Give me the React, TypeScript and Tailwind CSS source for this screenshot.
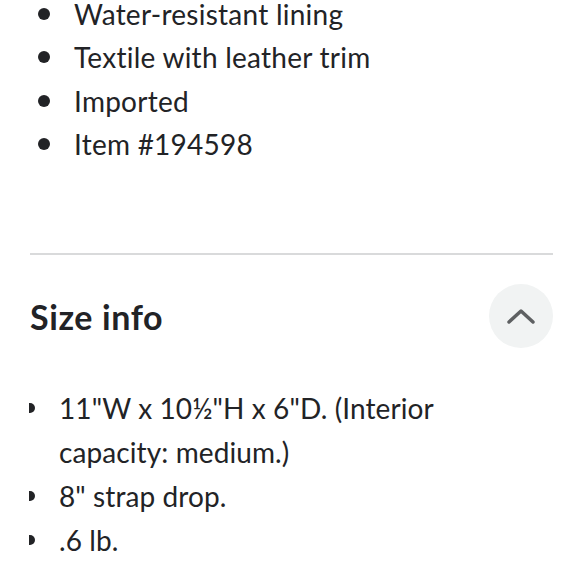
export default function App() {
  const features = [
    "Water-resistant lining",
    "Textile with leather trim",
    "Imported",
    "Item #194598",
  ];
  const sizes = [
    '11"W x 10\u00BD"H x 6"D. (Interior capacity: medium.)',
    '8" strap drop.',
    ".6 lb.",
  ];

  return (
    <div className="h-[580px] w-[580px] overflow-hidden bg-white text-[#222326] [font-family:Lato,'Noto_Sans',sans-serif]">
      <ul className="mt-[-8px] pl-[38px]">
        {features.map((f) => (
          <li key={f} className="flex h-[43.5px] items-center text-[28px] tracking-[0.25px]">
            <span className="mr-[24px] h-[12px] w-[12px] shrink-0 rounded-full bg-[#222326]" />
            <span>{f}</span>
          </li>
        ))}
      </ul>

      <div className="ml-[30px] mr-[27px] mt-[87px] h-[2px] bg-[#d9dadb]" />

      <div className="mt-[29px] flex items-center justify-between pl-[30px] pr-[27px]">
        <h2 className="text-[34px] font-bold tracking-[0.6px]">Size info</h2>
        <button className="flex h-[64px] w-[64px] items-center justify-center rounded-full bg-[#f1f3f3]">
          <svg width="28" height="16" viewBox="0 0 28 16" fill="none">
            <path
              d="M2 14 L14 3 L26 14"
              stroke="#5e6062"
              strokeWidth="3.5"
              strokeLinecap="round"
              strokeLinejoin="round"
            />
          </svg>
        </button>
      </div>

      <ul className="mt-[38px] pl-[29px] pr-[120px]">
        {sizes.map((s) => (
          <li key={s} className="flex text-[28px] leading-[44px] tracking-[0.1px]">
            <span className="mr-[24px] mt-[17px] h-[10px] w-[6px] shrink-0 rounded-r-full bg-[#222326]" />
            <span>{s}</span>
          </li>
        ))}
      </ul>
    </div>
  );
}
